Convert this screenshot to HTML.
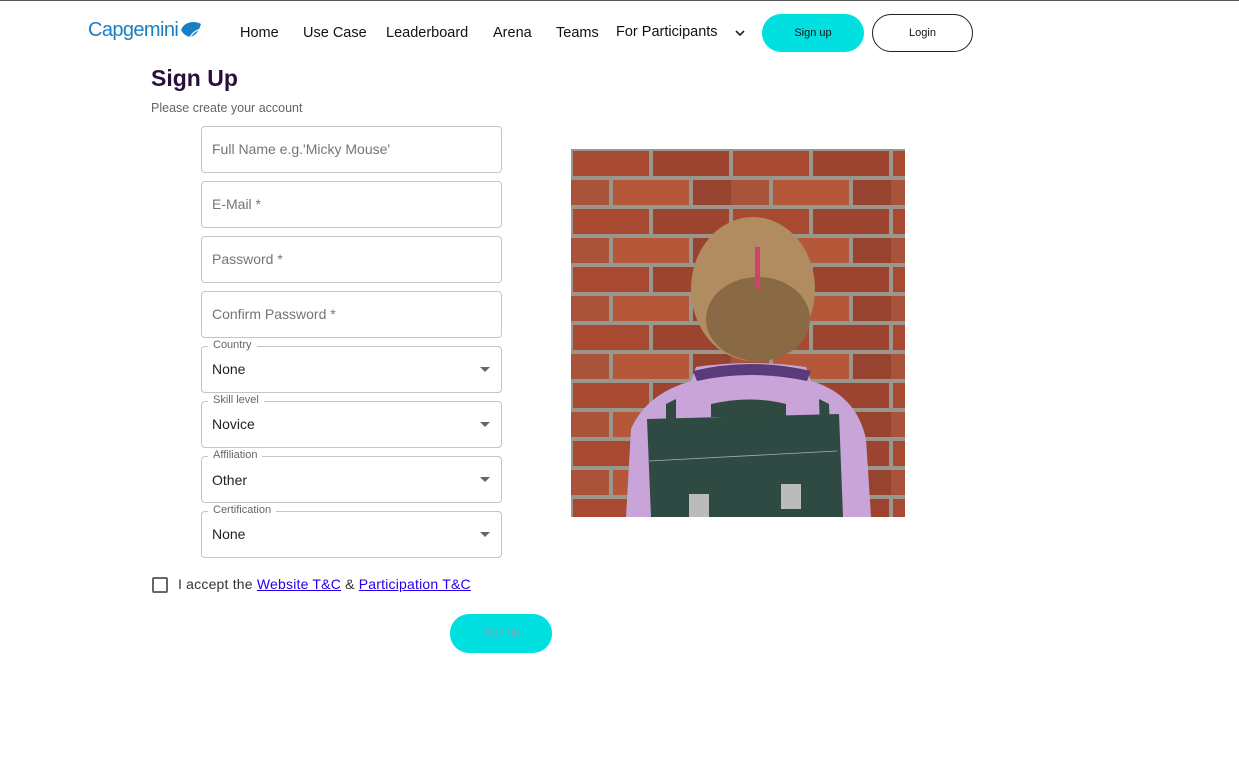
<!DOCTYPE html>
<html><head><meta charset="utf-8"><style>
*{box-sizing:border-box;margin:0;padding:0}
body{width:1239px;height:778px;background:#fff;font-family:"Liberation Sans",sans-serif;position:relative;overflow:hidden}
.a{position:absolute}
.nav{font-size:14.5px;color:#111;top:25px;letter-spacing:0}
.btn{border-radius:19px;font-size:11px;text-align:center;color:#111}
.f{position:absolute;left:201px;width:301px;height:47px;border:1px solid #c4c4c4;border-radius:4px;font-size:14px;color:#757575;padding:14px 0 0 10px}
.s{color:#222}
.lab{position:absolute;top:-8px;left:6px;background:#fff;padding:0 5px;font-size:11px;color:#666}
.arr{position:absolute;right:11px;top:20px;border-left:5px solid transparent;border-right:5px solid transparent;border-top:5px solid #666}
a{color:#2200ee}
</style></head><body>
<div class="a" style="left:0;top:0;width:1239px;height:1px;background:#555"></div>
<div class="a" style="left:88px;top:19px;font-size:20px;color:#1a7fc1;font-family:'Liberation Sans',sans-serif;letter-spacing:-.6px">Capgemini</div>
<svg class="a" style="left:180px;top:20px" width="22" height="18"><path d="M1 10 C4 2 14 0 21 4 C19 10 17 15 10 17 C6 16 3 14 1 10Z" fill="#1a7fc1"/><path d="M10 17 C13 12 17 10 21 9" stroke="#fff" stroke-width="1.2" fill="none"/></svg>
<div class="a nav" style="left:240px">Home</div>
<div class="a nav" style="left:303px">Use Case</div>
<div class="a nav" style="left:386px">Leaderboard</div>
<div class="a nav" style="left:493px">Arena</div>
<div class="a nav" style="left:556px">Teams</div>
<div class="a nav" style="left:616px;top:24px">For Participants</div>
<svg class="a" style="left:735px;top:29px" width="10" height="8"><path d="M1 2 L5 6 L9 2" stroke="#222" stroke-width="1.6" fill="none"/></svg>
<div class="a btn" style="left:762px;top:14px;width:102px;height:38px;background:#00e0e0;line-height:38px">Sign up</div>
<div class="a btn" style="left:872px;top:14px;width:101px;height:38px;border:1px solid #222;line-height:36px">Login</div>
<div class="a" style="left:151px;top:65px;font-size:23px;font-weight:bold;color:#2a0f3a">Sign Up</div>
<div class="a" style="left:151px;top:101px;font-size:12.5px;color:#666">Please create your account</div>
<div class="f" style="top:126px">Full Name e.g.'Micky Mouse'</div>
<div class="f" style="top:181px">E-Mail *</div>
<div class="f" style="top:236px">Password *</div>
<div class="f" style="top:291px">Confirm Password *</div>
<div class="f s" style="top:346px"><span class="lab">Country</span>None<i class="arr"></i></div>
<div class="f s" style="top:401px"><span class="lab">Skill level</span>Novice<i class="arr"></i></div>
<div class="f s" style="top:456px;padding-top:15px"><span class="lab">Affiliation</span>Other<i class="arr"></i></div>
<div class="f s" style="top:511px"><span class="lab">Certification</span>None<i class="arr"></i></div>
<div class="a" style="left:152px;top:577px;width:16px;height:16px;border:2px solid #666;border-radius:2px"></div>
<div class="a" style="left:178px;top:576px;font-size:14px;color:#333;letter-spacing:.2px">I accept the <a href="#">Website T&amp;C</a> &amp; <a href="#">Participation T&amp;C</a></div>
<div class="a btn" style="left:450px;top:614px;width:102px;height:39px;background:#00e0e0;line-height:39px;color:#7ab">Sign up</div>
<svg class="a" style="left:571px;top:149px" width="334" height="368">
<defs><pattern id="b" width="160" height="58" patternUnits="userSpaceOnUse">
<rect width="160" height="58" fill="#9a968c"/>
<rect x="2" y="2" width="76" height="25" fill="#a84a32"/><rect x="82" y="2" width="76" height="25" fill="#9c4430"/>
<rect x="-38" y="31" width="76" height="25" fill="#a8533a"/><rect x="42" y="31" width="76" height="25" fill="#b5583a"/><rect x="122" y="31" width="76" height="25" fill="#96442f"/>
</pattern></defs>
<rect width="334" height="368" fill="url(#b)"/>
<path d="M55 368 L60 280 Q75 245 120 232 L125 218 Q180 210 235 218 L240 232 Q285 245 295 290 L300 368Z" fill="#c8a4d8"/>
<path d="M122 222 Q180 208 240 222 L236 232 Q180 220 126 232Z" fill="#5a3a7a"/>
<ellipse cx="182" cy="140" rx="62" ry="72" fill="#b08c60"/>
<ellipse cx="187" cy="170" rx="52" ry="42" fill="#8a6a45"/>
<rect x="184" y="98" width="5" height="42" fill="#d04070"/>
<path d="M95 255 L105 250 L105 368 L95 368Z M248 250 L258 255 L262 368 L252 368Z" fill="#2f4a40"/>
<path d="M140 255 Q180 246 215 255 L215 268 L140 268Z" fill="#2f4a40"/>
<path d="M76 270 L268 265 L272 368 L80 368Z" fill="#2f4a42"/>
<path d="M78 312 L266 302" stroke="#aab" stroke-width=".8" fill="none"/>
<rect x="118" y="345" width="20" height="23" fill="#bbb"/><rect x="210" y="335" width="20" height="25" fill="#bbb"/>
</svg>
</body></html>
